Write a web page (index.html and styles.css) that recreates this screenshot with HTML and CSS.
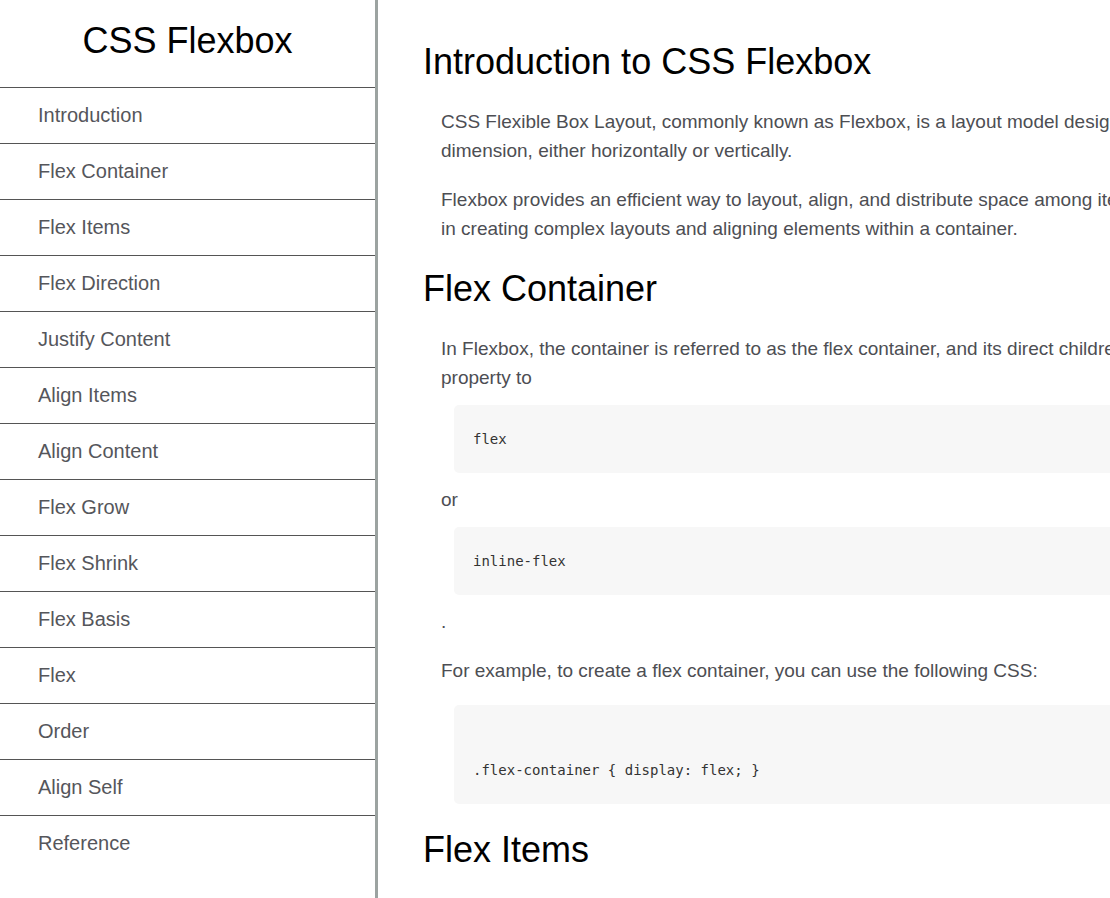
FILE: index.html
```html
<!DOCTYPE html>
<html lang="en">
<head>
<meta charset="utf-8">
<title>CSS Flexbox</title>
<link rel="stylesheet" href="styles.css">
</head>
<body>
<nav id="navbar" class="navbar">
  <header class="nav-header">CSS Flexbox</header>
  <ul class="nav-list">
    <li><a class="nav-link" href="#Introduction">Introduction</a></li>
    <li><a class="nav-link" href="#Flex_Container">Flex Container</a></li>
    <li><a class="nav-link" href="#Flex_Items">Flex Items</a></li>
    <li><a class="nav-link" href="#Flex_Direction">Flex Direction</a></li>
    <li><a class="nav-link" href="#Justify_Content">Justify Content</a></li>
    <li><a class="nav-link" href="#Align_Items">Align Items</a></li>
    <li><a class="nav-link" href="#Align_Content">Align Content</a></li>
    <li><a class="nav-link" href="#Flex_Grow">Flex Grow</a></li>
    <li><a class="nav-link" href="#Flex_Shrink">Flex Shrink</a></li>
    <li><a class="nav-link" href="#Flex_Basis">Flex Basis</a></li>
    <li><a class="nav-link" href="#Flex">Flex</a></li>
    <li><a class="nav-link" href="#Order">Order</a></li>
    <li><a class="nav-link" href="#Align_Self">Align Self</a></li>
    <li><a class="nav-link" href="#Reference">Reference</a></li>
  </ul>
</nav>
<main id="main-doc" class="main-doc">
  <section class="main-section" id="Introduction">
    <header class="section-title">Introduction to CSS Flexbox</header>
    <p>CSS Flexible Box Layout, commonly known as Flexbox, is a layout model designed for one dimension, either horizontally or vertically.</p>
    <p>Flexbox provides an efficient way to layout, align, and distribute space among items, helpful in creating complex layouts and aligning elements within a container.</p>
  </section>
  <section class="main-section" id="Flex_Container">
    <header class="section-title">Flex Container</header>
    <p>In Flexbox, the container is referred to as the flex container, and its direct children are property to <code class="code-block">flex</code> or <code class="code-block">inline-flex</code>.</p>
    <p>For example, to create a flex container, you can use the following CSS:</p>
    <pre class="code-block code-pre"><code>.flex-container { display: flex; }</code></pre>
  </section>
  <section class="main-section" id="Flex_Items">
    <header class="section-title">Flex Items</header>
    <p>Flex items are the direct children of a flex container. They can be laid out in any direction and can grow or shrink to fill the available space.</p>
  </section>
</main>
</body>
</html>
```

FILE: styles.css
```css
html, body {
  margin: 0;
  padding: 0;
  overflow: hidden;
  height: 100%;
}

body {
  display: flex;
  align-items: flex-start;
  font-family: "Liberation Sans", Arial, sans-serif;
  background: #ffffff;
  color: #4d4e53;
}

.navbar {
  flex: 0 0 375px;
  height: 100vh;
  border-right: 3px solid #9ca3a1;
}

.nav-header {
  font-size: 36px;
  line-height: 41px;
  color: #000;
  text-align: center;
  padding: 20px 0 26px;
}

.nav-list {
  list-style: none;
  margin: 0;
  padding: 0;
}

.nav-list li {
  border-top: 1px solid #555;
}

.nav-link {
  display: block;
  padding-left: 38px;
  height: 55px;
  line-height: 55px;
  font-size: 20px;
  color: #55565b;
  text-decoration: none;
}

.main-doc {
  flex: 0 0 auto;
  padding: 17px 0 0 45px;
}

.main-section {
  width: 796px;
}

.section-title {
  display: block;
  font-size: 36px;
  line-height: 41px;
  color: #000;
  margin: 25px 0 25px;
}

.main-section:first-child .section-title {
  margin-top: 24px;
}

.main-section p {
  margin: 20px 0 20px 18px;
  font-size: 19px;
  line-height: 29px;
  color: #4d4e53;
}

.code-block {
  display: block;
  margin: 13px 0 12px 13px;
  padding: 24px 19px;
  background: #f7f7f7;
  border-radius: 5px;
  font-family: "DejaVu Sans Mono", "Liberation Mono", monospace;
  font-size: 14px;
  line-height: 20px;
  color: #333;
}

.code-pre {
  margin: 20px 0 20px 31px;
  padding-top: 55px;
  white-space: pre;
}

.code-pre code {
  font-family: inherit;
  font-size: inherit;
}
```
